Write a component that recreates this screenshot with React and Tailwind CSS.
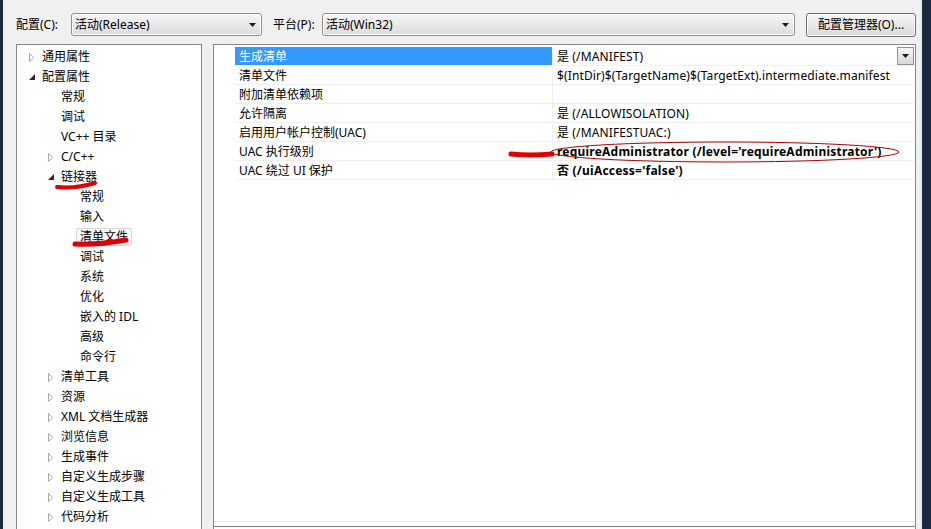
import React from "react";

const treeItems = [
  { t: "通用属性", l: 0, a: "c" },
  { t: "配置属性", l: 0, a: "e" },
  { t: "常规", l: 1 },
  { t: "调试", l: 1 },
  { t: "VC++ 目录", l: 1 },
  { t: "C/C++", l: 1, a: "c" },
  { t: "链接器", l: 1, a: "e" },
  { t: "常规", l: 2 },
  { t: "输入", l: 2 },
  { t: "清单文件", l: 2, sel: true },
  { t: "调试", l: 2 },
  { t: "系统", l: 2 },
  { t: "优化", l: 2 },
  { t: "嵌入的 IDL", l: 2 },
  { t: "高级", l: 2 },
  { t: "命令行", l: 2 },
  { t: "清单工具", l: 1, a: "c" },
  { t: "资源", l: 1, a: "c" },
  { t: "XML 文档生成器", l: 1, a: "c" },
  { t: "浏览信息", l: 1, a: "c" },
  { t: "生成事件", l: 1, a: "c" },
  { t: "自定义生成步骤", l: 1, a: "c" },
  { t: "自定义生成工具", l: 1, a: "c" },
  { t: "代码分析", l: 1, a: "c" },
];

const rows = [
  { n: "生成清单", v: "是 (/MANIFEST)", sel: true },
  { n: "清单文件", v: "$(IntDir)$(TargetName)$(TargetExt).intermediate.manifest" },
  { n: "附加清单依赖项", v: "" },
  { n: "允许隔离", v: "是 (/ALLOWISOLATION)" },
  { n: "启用用户帐户控制(UAC)", v: "是 (/MANIFESTUAC:)" },
  { n: "UAC 执行级别", v: "requireAdministrator (/level='requireAdministrator')", b: true },
  { n: "UAC 绕过 UI 保护", v: "否 (/uiAccess='false')", b: true },
];

const pads = ["pl-[10px]", "pl-[29px]", "pl-[48px]"];

function Arrow({ a }) {
  if (a === "c")
    return (
      <svg width="6" height="9" viewBox="0 0 6 9">
        <path d="M0.5 0.5 L4.8 4.5 L0.5 8.5 Z" fill="#fff" stroke="#a8a8a8" strokeWidth="1" />
      </svg>
    );
  if (a === "e")
    return (
      <svg width="6" height="6" viewBox="0 0 6 6">
        <path d="M6 0 L6 6 L0 6 Z" fill="#2b2b2b" />
      </svg>
    );
  return null;
}

function DownTri() {
  return (
    <svg width="7" height="4" viewBox="0 0 7 4">
      <path d="M0 0 L7 0 L3.5 4 Z" fill="#1a1a1a" />
    </svg>
  );
}

function Combo({ w, text }) {
  return (
    <div
      className={`${w} flex h-[23px] items-center justify-between rounded-[3px] border border-[#8e8f8f] bg-gradient-to-b from-[#f6f6f6] to-[#dcdcdc] pl-[3px] pr-[5px] shadow-[inset_0_0_0_1px_#ffffff]`}
    >
      <span>{text}</span>
      <DownTri />
    </div>
  );
}

function Tree() {
  return (
    <div className="h-[500px] w-[186px] shrink-0 border border-[#828790] bg-white pt-[2px]">
      {treeItems.map((it, i) => (
        <div key={i} className={`flex h-[20px] items-center ${pads[it.l]}`}>
          <div className="flex w-[15px] shrink-0 items-center pl-[2px]">
            <Arrow a={it.a} />
          </div>
          {it.sel ? (
            <span className="-ml-[4px] rounded-[2px] border border-[#d9d9d9] bg-[#f7f7f7] px-[3px] leading-[16px]">
              {it.t}
            </span>
          ) : (
            <span className="whitespace-nowrap">{it.t}</span>
          )}
        </div>
      ))}
    </div>
  );
}

function Grid() {
  return (
    <div className="flex h-[500px] w-[703px] shrink-0 flex-col border-x border-t border-[#828790] bg-white">
      <div className="h-[477px] border-b border-[#ececec] pl-[21px] pr-[1px] pt-[2px]">
        {rows.map((r, i) => (
          <div key={i} className="flex h-[19px] border-b border-[#f0f0f0]">
            <div
              className={`flex w-[318px] shrink-0 items-center border-r border-[#f0f0f0] pl-[4px] pt-[1px] ${
                r.sel ? "bg-[#3399ff] text-white" : ""
              }`}
            >
              {r.n}
            </div>
            <div className="flex flex-1 items-center justify-between pl-[4px]">
              <span
                className={`whitespace-nowrap pt-[1px] ${
                  r.b ? "font-bold tracking-[0.22px]" : "tracking-[0.12px]"
                }`}
              >
                {r.v}
              </span>
              {r.sel && (
                <div className="flex h-[18px] w-[17px] items-center justify-center border border-[#8e8f8f] bg-gradient-to-b from-[#f6f6f6] to-[#d8d8d8]">
                  <DownTri />
                </div>
              )}
            </div>
          </div>
        ))}
      </div>
      <div className="h-[4px]" />
      <div className="border-t border-[#808080]" />
    </div>
  );
}

export default function App() {
  return (
    <div className="relative flex h-[529px] w-[931px] overflow-hidden bg-[#f0f0f0] font-['Noto_Sans','Noto_Sans_CJK_SC',sans-serif] text-[12px] text-black">
      <div className="w-[3px] shrink-0 bg-[#1b2942]" />
      <div className="flex w-[918px] shrink-0 flex-col pl-[13px] pr-[5px] pt-[13px]">
        <div className="flex h-[23px] items-center">
          <span className="w-[55px] shrink-0">配置(C):</span>
          <Combo w="w-[191px]" text="活动(Release)" />
          <span className="ml-[11px] w-[49px] shrink-0">平台(P):</span>
          <Combo w="w-[473px]" text="活动(Win32)" />
          <div className="ml-[11px] flex h-[24px] w-[110px] items-center justify-center rounded-[3px] border border-[#707070] bg-gradient-to-b from-[#f6f6f6] to-[#dadada] shadow-[inset_0_0_0_1px_#fcfcfc]">
            配置管理器(O)...
          </div>
        </div>
        <div className="mt-[8px] flex gap-[11px]">
          <Tree />
          <Grid />
        </div>
      </div>
      <div className="w-[1px] shrink-0 bg-[#e4e7ee]" />
      <div className="flex-1 bg-[#1b2942]" />

      <svg className="pointer-events-none absolute left-0 top-0" width="931" height="529" viewBox="0 0 931 529">
        <path d="M57 187 Q75 189 95 183" stroke="#e00000" strokeWidth="4" fill="none" strokeLinecap="round" />
        <path d="M75 244 Q100 245 126 240" stroke="#e00000" strokeWidth="5" fill="none" strokeLinecap="round" />
        <path d="M511 154 Q530 156 552 154" stroke="#e00000" strokeWidth="5" fill="none" strokeLinecap="round" />
        <ellipse cx="725" cy="152" rx="174" ry="10" stroke="#b00000" strokeWidth="1" fill="none" />
      </svg>
    </div>
  );
}
